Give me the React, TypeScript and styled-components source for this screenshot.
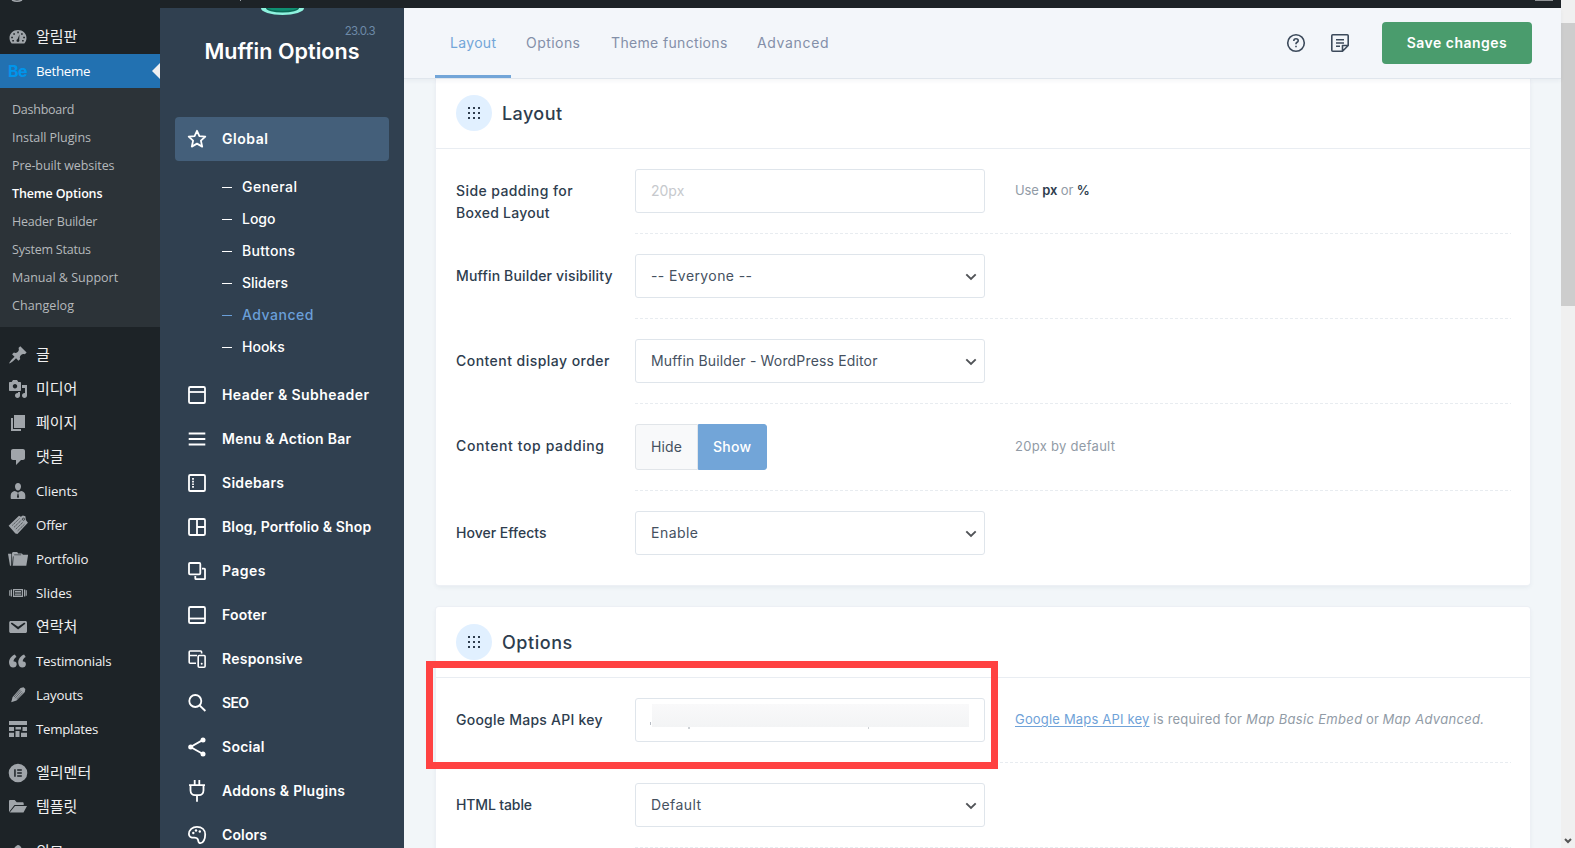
import React from 'react';
import styled, { createGlobalStyle, css } from 'styled-components';

const GlobalStyle = createGlobalStyle`
  * { box-sizing: border-box; }
  html, body { margin: 0; height: 100%; overflow: hidden; }
  body { font-family: Inter, "Noto Sans CJK KR", sans-serif; font-size: 14px; color: #2e3d4e; background: #f2f6f9; }
`;

const Page = styled.div`
  display: flex;
  width: 1575px;
  height: 848px;
  overflow: hidden;
  position: relative;
`;
const Main = styled.div`
  display: flex;
  flex-direction: column;
  width: 1561px;
  height: 848px;
`;
const Body = styled.div`
  display: flex;
  flex: 1;
  min-height: 0;
`;
const Track = styled.span<{ $ls?: number }>`
  letter-spacing: ${(p) => p.$ls ?? 0}px;
  white-space: nowrap;
`;

/* admin bar */
const AdminBar = styled.header`
  display: flex;
  justify-content: space-between;
  height: 8px;
  padding: 0 8px 0 11px;
  background: #1d2327;
  flex: none;
`;
const AvatarEdge = styled.div`
  width: 18px;
  height: 1px;
  background: #8f9396;
`;

/* WordPress menu */
const WpMenu = styled.nav`
  width: 160px;
  flex: none;
  padding-top: 12px;
  background: #1d2327;
  overflow: hidden;
  font-family: "Open Sans", "Noto Sans CJK KR", sans-serif;
`;
const WpItem = styled.div<{ $active?: boolean; $gap?: number; $ko?: boolean }>`
  display: flex;
  align-items: center;
  position: relative;
  height: 34px;
  margin-top: ${(p) => p.$gap ?? 0}px;
  padding-left: 8px;
  gap: 8px;
  font-size: ${(p) => (p.$ko ? 15 : 13.3)}px;
  line-height: 18px;
  color: ${(p) => (p.$active ? '#fff' : '#f0f0f1')};
  background: ${(p) => (p.$active ? '#2271b1' : 'transparent')};
  svg { flex: none; width: 20px; height: 20px; fill: #a0a5aa; }
  ${(p) => p.$ko && css`
    span { padding-bottom: 2px; }
  `}
  ${(p) => p.$active && css`
    &::after {
      content: '';
      position: absolute;
      right: 0;
      top: 9px;
      border: 8px solid transparent;
      border-left-width: 0;
      border-right-color: #f0f0f1;
    }
  `}
`;
const BeLogo = styled.span`
  width: 20px;
  font: 700 16px/20px Inter, sans-serif;
  letter-spacing: -0.6px;
  color: #0095eb;
`;
const WpSub = styled.div`
  height: 239px;
  padding: 8px 12px;
  background: #2c3338;
`;
const WpSubItem = styled.div<{ $current?: boolean }>`
  height: 28px;
  line-height: 28px;
  font-size: 12.5px;
  font-weight: ${(p) => (p.$current ? 600 : 400)};
  color: ${(p) => (p.$current ? '#fff' : '#b5b9bc')};
`;

/* Muffin sidebar */
const Muffin = styled.aside`
  width: 244px;
  flex: none;
  background: #304050;
  color: #fff;
  overflow: hidden;
`;
const Brand = styled.div`
  display: flex;
  flex-direction: column;
  align-items: center;
  height: 109px;
  svg { display: block; }
`;
const Version = styled.div`
  align-self: flex-end;
  margin: 7px 29px 0 0;
  font-size: 11.5px;
  line-height: 16px;
  color: #6d8aa8;
`;
const Title = styled.div`
  margin: -3px 0 0;
  font-size: 21.5px;
  font-weight: 600;
  line-height: 30px;
`;
const Section = styled.div<{ $active?: boolean }>`
  display: flex;
  align-items: center;
  gap: 13px;
  height: 44px;
  margin: 0 15px;
  padding-left: 10px;
  border-radius: 4px;
  font-weight: 600;
  background: ${(p) => (p.$active ? '#445f7a' : 'transparent')};
  svg { width: 24px; height: 24px; fill: none; stroke: #fff; stroke-width: 1.8; flex: none; overflow: visible; }
  span { padding-bottom: 2px; }
`;
const SubList = styled.div`
  padding: 10px 0 10px 62px;
`;
const SubItem = styled.div<{ $current?: boolean }>`
  display: flex;
  align-items: center;
  gap: 10px;
  height: 32px;
  font-weight: 500;
  color: ${(p) => (p.$current ? '#6a9fd8' : '#fff')};
  span { padding-bottom: 2px; }
  &::before { content: ''; width: 10px; height: 1px; background: currentColor; }
`;

/* content */
const Content = styled.main`
  display: flex;
  flex-direction: column;
  flex: 1;
  min-width: 0;
  background: #f2f6f9;
`;
const TopBar = styled.div`
  display: flex;
  align-items: center;
  height: 71px;
  flex: none;
  padding: 0 29px 0 31px;
  border-bottom: 1px solid #e0e6ed;
  background: #f3f6fa;
  box-shadow: 0 2px 4px rgba(30, 60, 90, 0.05);
  position: relative;
  z-index: 1;
`;
const Tab = styled.div<{ $active?: boolean; $w: number }>`
  width: ${(p) => p.$w}px;
  height: 70px;
  padding: 3px 15px 0;
  line-height: 64px;
  color: ${(p) => (p.$active ? '#72a5d8' : '#838fa8')};
  border-bottom: 3px solid ${(p) => (p.$active ? '#72a5d8' : 'transparent')};
`;
const Tools = styled.div`
  display: flex;
  align-items: center;
  margin-left: auto;
  gap: 20px;
  svg { width: 24px; height: 24px; fill: none; stroke: #3c4a5b; stroke-width: 1.6; }
`;
const SaveButton = styled.button`
  width: 150px;
  height: 42px;
  margin-left: 10px;
  padding: 0 0 2px;
  border: 0;
  border-radius: 4px;
  background: #4a9c6d;
  color: #fff;
  font: 600 14px Inter, sans-serif;
`;
const Scroll = styled.div`
  flex: 1;
  min-height: 0;
  overflow: hidden;
  padding: 0 31px 0 32px;
`;
const Card = styled.section<{ $cut?: boolean }>`
  margin-bottom: 22px;
  padding-bottom: 10px;
  border-radius: ${(p) => (p.$cut ? '0 0 3px 3px' : '3px')};
  background: #fff;
  box-shadow: 0 0 0 1px #edf0f5, 0 2px 5px rgba(30, 50, 90, 0.07);
`;
const CardHead = styled.div<{ $cut?: boolean }>`
  display: flex;
  align-items: center;
  gap: 10px;
  height: ${(p) => (p.$cut ? 70 : 71)}px;
  padding: 0 20px ${(p) => (p.$cut ? 1 : 0)}px;
  border-bottom: 1px solid #e9edf2;
  font-size: 18px;
  font-weight: 500;
`;
const Circle = styled.span`
  display: grid;
  place-items: center;
  width: 36px;
  height: 36px;
  border-radius: 50%;
  background: #e1f0ff;
`;
const Row = styled.div`
  display: grid;
  grid-template-columns: 179px 1fr;
  padding: 0 19px 0 20px;
`;
const Label = styled.div`
  padding-top: 31px;
  line-height: 22px;
  font-weight: 500;
`;
const Cell = styled.div<{ $last?: boolean }>`
  display: grid;
  grid-template-columns: 350px 1fr;
  column-gap: 30px;
  padding: 20px 0;
  ${(p) => !p.$last && css`
    padding-bottom: 21px;
    background: repeating-linear-gradient(90deg, #e8ecf0 0 3px, transparent 3px 5px) left bottom / 100% 1px no-repeat;
  `}
`;
const Field = styled.div<{ $muted?: boolean }>`
  display: flex;
  align-items: center;
  justify-content: space-between;
  height: 44px;
  padding: 0 7px 0 15px;
  border: 1px solid #dfe5eb;
  border-radius: 3px;
  background: #fff;
  color: ${(p) => (p.$muted ? '#c6c9cd' : '#45515f')};
  span { padding-bottom: 2px; }
  svg { margin-top: 2px; }
`;
const Redacted = styled.span`
  position: relative;
  width: 317px;
  height: 23px;
  margin: -10px 0 0 1px;
  background: linear-gradient(180deg, #f9f9fa, #f3f4f5);
  &::before {
    content: '';
    position: absolute;
    left: -2px;
    bottom: 2px;
    width: 1px;
    height: 3px;
    background: #b8bdc4;
  }
  &::after {
    content: '';
    position: absolute;
    left: 36px;
    bottom: -2px;
    width: 178px;
    height: 2px;
    border: solid #ced2d6;
    border-width: 0 1px 0 2px;
  }
`;
const Toggle = styled.div`
  display: flex;
  height: 46px;
`;
const Option = styled.div<{ $on?: boolean }>`
  width: ${(p) => (p.$on ? 69 : 63)}px;
  border: 1px solid ${(p) => (p.$on ? '#72a5d8' : '#e1e5e9')};
  border-radius: ${(p) => (p.$on ? '0 3px 3px 0' : '3px 0 0 3px')};
  background: ${(p) => (p.$on ? '#72a5d8' : '#f8f9fa')};
  color: ${(p) => (p.$on ? '#fff' : '#45515f')};
  font-weight: ${(p) => (p.$on ? 500 : 400)};
  line-height: 44px;
  padding-left: ${(p) => (p.$on ? 14 : 15)}px;
`;
const Desc = styled.div<{ $top?: number }>`
  padding-top: ${(p) => p.$top ?? 10}px;
  font-size: 13px;
  line-height: 22px;
  color: #919ba6;
  white-space: nowrap;
  b { color: #2e3d4e; font-weight: 600; }
`;
const Link = styled.a`
  color: #6fa2d8;
  text-decoration: underline;
  text-underline-offset: 2px;
  letter-spacing: 0.18px;
`;

/* overlays */
const Highlight = styled.div`
  position: absolute;
  left: 426px;
  top: 661px;
  width: 572px;
  height: 108px;
  border: 7px solid #ff4242;
  z-index: 2;
`;
const Scrollbar = styled.div`
  display: flex;
  flex-direction: column;
  justify-content: space-between;
  align-items: center;
  width: 14px;
  padding: 23px 0 4px;
  background: #f0f0f0;
`;
const Thumb = styled.div`
  width: 14px;
  height: 283px;
  background: #cdcdcd;
`;

const wpIcons: Record<string, React.ReactNode> = {
  dash: <path fillRule="evenodd" d="M3.700 16.500h12.600c1.400-1.500 2.200-3.400 2.200-5.500C18.500 6.500 14.700 3 10 3S1.500 6.500 1.500 11c0 2.100.8 4 2.200 5.500zM9.300 4.500h1.500v1.700H9.300zM5.300 6.200h1.600v1.600H5.300zM13.100 6.200h1.600v1.600h-1.600zM3.200 9.700h1.700v1.600H3.200zM15.200 9.700h1.700v1.600h-1.700zM4.300 13h1.600v1.600H4.300zM14.100 13h1.600v1.600h-1.600zM11.500 7.600l-.3 5.200c.6 1.200-.1 2.200-1.200 2.200s-1.800-.9-1.400-2c.2-.5.5-.7.9-.8z" />,
  post: <path d="M10.44 3.02l1.82-1.82 6.36 6.35-1.83 1.82c-1.05-.68-2.48-.57-3.41.36l-.75.75c-.92.93-1.04 2.35-.35 3.41l-1.83 1.82-2.41-2.41-2.8 2.79c-.42.42-3.38 2.71-3.8 2.29s1.86-3.39 2.28-3.81l2.79-2.79L4.1 9.36l1.83-1.82c1.05.69 2.48.57 3.4-.36l.75-.75c.93-.92 1.05-2.35.36-3.41z" />,
  media: <path fillRule="evenodd" d="M13 11V4c0-.55-.45-1-1-1h-1.670L9 1H5L3.670 3H2c-.55 0-1 .45-1 1v7c0 .55.45 1 1 1h10c.55 0 1-.45 1-1zM7 5c1.300 0 2.200 1 2.200 2.200S8.300 9.400 7 9.400 4.800 8.400 4.800 7.200 5.700 5 7 5zM14 6h5v10.500c0 1.380-1.120 2.500-2.500 2.500S14 17.880 14 16.500s1.120-2.500 2.500-2.500c.17 0 .34.02.5.05V9h-3V6zm-4 8.050V13h2v3.500c0 1.380-1.120 2.500-2.500 2.500S7 17.880 7 16.500 8.120 14 9.500 14c.17 0 .34.02.5.05z" />,
  page: <path d="M6 15V2h11v13H6zm-1 1h8v2H3V5h2v11z" />,
  comments: <path d="M5 2h10c1.100 0 2 .9 2 2v7c0 1.100-.9 2-2 2h-2l-5 5v-5H5c-1.100 0-2-.9-2-2V4c0-1.100.9-2 2-2z" />,
  person: <path fillRule="evenodd" d="M10 2c1.800 0 3 1.400 3 3.400S11.700 9.400 10 9.400 7 7.400 7 5.400 8.200 2 10 2zM6.800 10l2.400 1 .8 1 .8-1 2.400-1c2.500.4 4.100 2 4.100 4.500V17c0 .6-.4 1-1 1H3.700c-.6 0-1-.4-1-1v-2.500c0-2.500 1.600-4.100 4.100-4.500zM9.600 12.400L9 16l1 1.300L11 16l-.6-3.600z" />,
  offer: <><path d="M.6 10.800L11 .8l1.900 1 1.900-1.300 2.600.8.5 3.800 2 2.600L9.400 19l-2-.6z" /><path d="M4.200 10.500l7.300-7M6 12.300l7.300-7M7.800 14.100l7.300-7M9.600 15.900l7-6.800" fill="none" stroke="#1d2327" strokeWidth="0.6" strokeDasharray="1.800 .5" /><circle cx="15.500" cy="4.200" r="1.100" fill="none" stroke="#1d2327" strokeWidth=".7" /></>,
  portfolio: <><path d="M4 6.300V4.500C4 3.700 4.600 3 5.500 3h3c.8 0 1.500.7 1.500 1.500h3.300c.8 0 1.500.6 1.500 1.300h5.300l-1.800 10.900H4.700z" /><path d="M0 4.800h3.400L3.200 16.700H2z" /><path d="M6.200 5.800h7M5.500 7.400l-1 8.500" fill="none" stroke="#1d2327" strokeWidth=".6" /></>,
  slides: <path fillRule="evenodd" d="M5 6h10v8H5zM6.200 7.200v5.600h7.600V7.200zM7 8h6v1H7zM7 9.600h6v1H7zM7 11.200h6v1H7zM2.700 6.500H4v7H2.700zM16 6.500h1.300v7H16zM1.200 7.200h1v5.600h-1zM17.800 7.200h1v5.600h-1z" />,
  email: <path d="M3 4h14.200C18.400 4 19 4.600 19 5.800v8.400c0 1.200-.6 1.800-1.800 1.800H3c-1.200 0-1.800-.6-1.800-1.800V5.800C1.200 4.600 1.800 4 3 4zm7.100 8.600l6.900-5.500c.3-.3.4-.7.100-1.100-.3-.4-.8-.4-1.100-.2l-5.900 3.900-5.900-3.900c-.3-.2-.8-.2-1.100.2-.3.4-.2.8.1 1.100z" />,
  quote: <path d="M8.700 13.200c0-.7-.2-1.400-.6-1.900-.6-.8-1.800-.9-2.500-.7-.3-1.700 1.100-3.800 2.900-4.700L6.900 3.500c-3.200 1.300-6.300 4.700-5.800 8.700C1.400 14.900 3 16.500 5.100 16.500c2.100 0 3.600-1.300 3.600-3.300zm9.200 0c0-.7-.2-1.400-.6-1.900-.6-.8-1.800-.9-2.500-.7-.3-1.700 1.100-3.800 2.900-4.700l-1.600-2.400c-3.200 1.300-6.300 4.700-5.800 8.700.3 2.700 1.900 4.300 4 4.300s3.600-1.300 3.600-3.300z" />,
  edit: <><path d="M12.500 3l3-.7 1.800 1.600-.4 3L8.500 15.500 3.200 17.200 4.600 12z" /><path d="M7 13.300l6.500-7.200M6 12l6.500-7.200M8.600 14.200l6-6.600" fill="none" stroke="#1d2327" strokeWidth=".5" /></>,
  templates: <path d="M1 2h18v4H1zM1 8h5v4H1zM7.500 8h5.500v2.500H7.500zM14.500 8H19v4h-4.500zM1 13.700h5V18H1zM7.500 12h4v6h-4zM13 13.700h6V18h-6z" />,
  elementor: <path fillRule="evenodd" d="M10 .7a9.300 9.300 0 1 0 0 18.600A9.300 9.300 0 0 0 10 .7zM6.200 6.200h1.500v7.600H6.200zM9.200 6.200h4.600v1.500H9.200zM9.200 9.200h4.600v1.500H9.200zM9.200 12.300h4.600v1.500H9.200z" />,
  folder: <path d="M1 15.200V4.300C1 3.500 1.500 3 2.200 3h4.500l2 2.200h5.800c.7 0 1.200.5 1.200 1.200v1.500H6.500L1.800 14zM7 9h12l-3.500 6.500H1.700z" />,
  looks: <path d="M10 3c2 0 3 2 4 4l-4 12L3 10c2-2 5-7 7-7z" />,
};
const WpIcon = ({ name }: { name: string }) => <svg viewBox="0 0 20 20">{wpIcons[name]}</svg>;

const box = <rect x="4" y="4" width="16" height="16" rx="1.300" />;
const muffinIcons: Record<string, React.ReactNode> = {
  star: <path strokeLinejoin="round" d="M12 3.800l2.400 5.300 5.900.6-4.400 3.900 1.300 6-5.200-3-5.200 3 1.300-6-4.400-3.900 5.900-.6z" />,
  header: <>{box}<path d="M4 9h16" /></>,
  menu: <path d="M3.700 6.500h16.600M3.700 12h16.600M3.700 17.500h16.600" />,
  sidebar: <>{box}<path d="M8 7v10" strokeDasharray="1.700 1" /></>,
  blog: <>{box}<path d="M12 4v16M12 12h8" /></>,
  pages: <><rect x="4" y="4" width="11.300" height="11.300" rx="1" /><path d="M17 9.700h2.300a.7.7 0 0 1 .7.7v9.100a.7.7 0 0 1-.7.7h-8.300a.7.7 0 0 1-.7-.7V17" /></>,
  footer: <>{box}<path d="M4 15.500h16" /></>,
  responsive: <><path strokeWidth="1.600" d="M11 16.200H5.200a1 1 0 0 1-1-1V5a1 1 0 0 1 1-1h10.400a1 1 0 0 1 1 1v1.500M4.200 8.500H12" /><rect strokeWidth="1.600" x="13.200" y="8.500" width="6.900" height="11.700" rx="1" /><circle cx="16.700" cy="16.800" r="1" fill="#fff" stroke="none" /></>,
  search: <><circle cx="10.300" cy="10" r="6" /><path d="M14.700 14.500l5.700 5.500" /></>,
  share: <><path d="M18 4.900L5.500 12 18 19" /><g fill="#fff" stroke="none"><circle cx="18" cy="4.900" r="2.500" /><circle cx="5.700" cy="12" r="2.500" /><circle cx="18" cy="19" r="2.500" /></g></>,
  plug: <path d="M9.700 1v5M14.300 1v5M4 6.200h16M5.500 6.200v5c0 3 2 5 4.500 5h4c2.500 0 4.500-2 4.500-5v-5M12 16.200v6.500" />,
  palette: <><path d="M12 3.800c4.800 0 8.200 3 8.200 7.700 0 4.500-2 8.700-4.700 8.700-2.500 0-2-2-2.500-3.500-.6-1.700-1.900-2-3.700-2-3.300 0-5.400-.8-5.400-3.600 0-4 3.500-7.300 8.100-7.300z" /><g fill="#fff" stroke="none"><circle cx="8.300" cy="10" r="1.200" /><circle cx="11" cy="7.500" r="1.200" /><circle cx="14.800" cy="8.500" r="1.200" /></g></>,
};
const MuffinIcon = ({ name }: { name: string }) => <svg viewBox="0 0 24 24">{muffinIcons[name]}</svg>;

const wpSub: [string, number, boolean?][] = [
  ['Dashboard', -0.25], ['Install Plugins', -0.07], ['Pre-built websites', -0.08], ['Theme Options', -0.15, true],
  ['Header Builder', -0.2], ['System Status', -0.22], ['Manual & Support', 0], ['Changelog', 0.07],
];
const wpItems: { icon: string; text: string; ls?: number; ko?: boolean; gap?: number }[] = [
  { icon: 'post', text: '글', ko: true, gap: 11 },
  { icon: 'media', text: '미디어', ko: true },
  { icon: 'page', text: '페이지', ko: true },
  { icon: 'comments', text: '댓글', ko: true },
  { icon: 'person', text: 'Clients', ls: -0.05 },
  { icon: 'offer', text: 'Offer', ls: -0.17 },
  { icon: 'portfolio', text: 'Portfolio', ls: -0.11 },
  { icon: 'slides', text: 'Slides' },
  { icon: 'email', text: '연락처', ko: true },
  { icon: 'quote', text: 'Testimonials', ls: -0.24 },
  { icon: 'edit', text: 'Layouts', ls: -0.2 },
  { icon: 'templates', text: 'Templates', ls: -0.28 },
  { icon: 'elementor', text: '엘리멘터', ko: true, gap: 10 },
  { icon: 'folder', text: '템플릿', ko: true },
  { icon: 'looks', text: '외모', ko: true, gap: 11 },
];
const globalItems: [string, number][] = [
  ['General', 0.47], ['Logo', 0], ['Buttons', 0.33], ['Sliders', 0], ['Advanced', 0.52], ['Hooks', 0],
];
const sections: [string, string, number][] = [
  ['header', 'Header & Subheader', 0.42], ['menu', 'Menu & Action Bar', 0.26], ['sidebar', 'Sidebars', 0.29],
  ['blog', 'Blog, Portfolio & Shop', 0.13], ['pages', 'Pages', 0.46], ['footer', 'Footer', 0.21],
  ['responsive', 'Responsive', 0.24], ['search', 'SEO', -0.67], ['share', 'Social', 0.27],
  ['plug', 'Addons & Plugins', 0.3], ['palette', 'Colors', 0.14],
];
const tabs: [string, number, number][] = [
  ['Layout', 76, 0.32], ['Options', 85, 0.45], ['Theme functions', 146, 0.34], ['Advanced', 102, 0.65],
];

const Grip = () => (
  <Circle>
    <svg width="14" height="14" viewBox="0 0 14 14" fill="#2e3d4e">
      {[1, 6, 11].flatMap((y) => [1, 6, 11].map((x) => <rect key={`${x}-${y}`} x={x} y={y} width="2" height="2" />))}
    </svg>
  </Circle>
);
const Select = ({ text, ls }: { text: string; ls: number }) => (
  <Field>
    <Track $ls={ls}>{text}</Track>
    <svg width="12" height="8" viewBox="0 0 12 8" fill="none" stroke="#505357" strokeWidth="1.900"><path d="M1.300 1.300L6 6l4.700-4.700" /></svg>
  </Field>
);
const Setting = ({ label, ls, children, last }: { label: string; ls: number; children: React.ReactNode; last?: boolean }) => (
  <Row>
    <Label><Track $ls={ls}>{label}</Track></Label>
    <Cell $last={last}>{children}</Cell>
  </Row>
);

export default function App() {
  return (
    <Page>
      <GlobalStyle />
      <Main>
        <AdminBar>
          <svg width="232" height="8" viewBox="0 0 232 8" fill="none" stroke="#a0a5aa">
            <path d="M1 0q5 2.500 10 0" strokeWidth="1.500" />
            <path d="M229.500 0v1" />
          </svg>
          <AvatarEdge />
        </AdminBar>
        <Body>
          <WpMenu>
            <WpItem $ko><WpIcon name="dash" /><Track>알림판</Track></WpItem>
            <WpItem $active><BeLogo>Be</BeLogo><Track $ls={-0.28}>Betheme</Track></WpItem>
            <WpSub>
              {wpSub.map(([t, ls, cur]) => <WpSubItem key={t} $current={cur}><Track $ls={ls}>{t}</Track></WpSubItem>)}
            </WpSub>
            {wpItems.map((i) => (
              <WpItem key={i.text} $ko={i.ko} $gap={i.gap}><WpIcon name={i.icon} /><Track $ls={i.ls}>{i.text}</Track></WpItem>
            ))}
          </WpMenu>

          <Muffin>
            <Brand>
              <svg width="44" height="8" viewBox="0 0 44 8">
                <ellipse cx="22.500" cy="0" rx="21.500" ry="7" fill="#8ef3df" />
                <ellipse cx="22.500" cy="0" rx="16.500" ry="4.600" fill="#0b6b57" />
                <ellipse cx="22.500" cy="0" rx="15" ry="2.800" fill="#0f8f72" />
              </svg>
              <Version><Track $ls={-0.6}>23.0.3</Track></Version>
              <Title><Track $ls={0.05}>Muffin Options</Track></Title>
            </Brand>
            <Section $active><MuffinIcon name="star" /><Track $ls={0.55}>Global</Track></Section>
            <SubList>
              {globalItems.map(([t, ls]) => <SubItem key={t} $current={t === 'Advanced'}><Track $ls={ls}>{t}</Track></SubItem>)}
            </SubList>
            {sections.map(([icon, t, ls]) => (
              <Section key={t}><MuffinIcon name={icon} /><Track $ls={ls}>{t}</Track></Section>
            ))}
          </Muffin>

          <Content>
            <TopBar>
              {tabs.map(([t, w, ls]) => <Tab key={t} $w={w} $active={t === 'Layout'}><Track $ls={ls}>{t}</Track></Tab>)}
              <Tools>
                <svg viewBox="0 0 24 24">
                  <circle cx="12" cy="12" r="8.300" />
                  <path d="M9.800 9.900c0-1.300 1-2.100 2.200-2.100s2.200.8 2.200 1.900c0 1.500-2.200 1.600-2.200 3.100v.4M12 14.700v1.600" />
                </svg>
                <svg viewBox="0 0 24 24">
                  <path strokeLinejoin="round" d="M14.500 20.200H4.800a1 1 0 0 1-1-1V4.800a1 1 0 0 1 1-1h14.400a1 1 0 0 1 1 1v9.700zM14.500 20v-5.500H20" />
                  <path d="M8 8.800h8M8 12h8M8 15.200h4" />
                </svg>
                <SaveButton><Track $ls={0.48}>Save changes</Track></SaveButton>
              </Tools>
            </TopBar>
            <Scroll>
              <Card $cut>
                <CardHead $cut><Grip /><Track $ls={0.41}>Layout</Track></CardHead>
                <Row>
                  <Label><Track $ls={0.41}>Side padding for</Track><br /><Track $ls={0.27}>Boxed Layout</Track></Label>
                  <Cell>
                    <Field $muted><Track>20px</Track></Field>
                    <Desc><Track $ls={-0.13}>Use <b>px</b> or <b>%</b></Track></Desc>
                  </Cell>
                </Row>
                <Setting label="Muffin Builder visibility" ls={0.16}><Select text="-- Everyone --" ls={0.41} /></Setting>
                <Setting label="Content display order" ls={0.46}><Select text="Muffin Builder - WordPress Editor" ls={0.16} /></Setting>
                <Setting label="Content top padding" ls={0.61}>
                  <Toggle>
                    <Option><Track $ls={0.16}>Hide</Track></Option>
                    <Option $on><Track $ls={0.25}>Show</Track></Option>
                  </Toggle>
                  <Desc $top={11}><Track $ls={0.29}>20px by default</Track></Desc>
                </Setting>
                <Setting label="Hover Effects" ls={0.01} last><Select text="Enable" ls={0.47} /></Setting>
              </Card>
              <Card>
                <CardHead><Grip /><Track $ls={0.55}>Options</Track></CardHead>
                <Setting label="Google Maps API key" ls={0.24}>
                  <Field><Redacted /></Field>
                  <Desc>
                    <Link>Google Maps API key</Link><Track $ls={0.21}> is required for </Track>
                    <Track as="i" $ls={0.32}>Map Basic Embed</Track> or <Track as="i" $ls={0.33}>Map Advanced.</Track>
                  </Desc>
                </Setting>
                <Setting label="HTML table" ls={-0.13}><Select text="Default" ls={0.41} /></Setting>
              </Card>
            </Scroll>
          </Content>
        </Body>
      </Main>
      <Scrollbar>
        <Thumb />
        <svg width="8" height="6" viewBox="0 0 8 6" fill="none" stroke="#555" strokeWidth="2"><path d="M1 1l3 3 3-3" /></svg>
      </Scrollbar>
      <Highlight />
    </Page>
  );
}
